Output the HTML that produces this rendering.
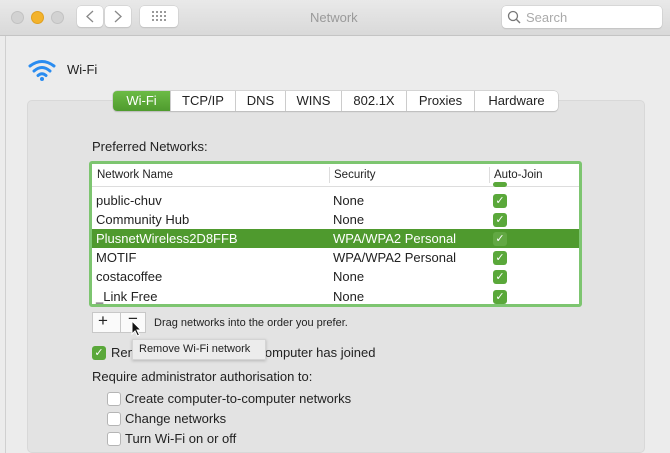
<!DOCTYPE html>
<html><head><style>
*{box-sizing:border-box;margin:0;padding:0}
body{width:670px;height:453px;overflow:hidden;font-family:"Liberation Sans",sans-serif;background:#ececec;position:relative;color:#222;font-size:13px}
.abs{position:absolute}
.title{left:0;top:0;width:670px;height:36px;background:linear-gradient(#e9e9e9,#d9d9d9);border-bottom:1px solid #c4c4c4}
.dot{width:13px;height:13px;border-radius:50%;top:11px;background:#d2d2d2;border:1px solid #c2c2c2}
.btn{background:#fff;border-radius:4px;box-shadow:0 0 0 .5px #c8c8c8,0 1px 1px #bbb;height:21px;top:6px}
.tab{top:91px;height:20px;border-right:1px solid #ccc;text-align:center;line-height:19px;font-size:13px}
.cb{width:14px;height:14px;border-radius:3px;background:#fff;border:1px solid #b5b5b5}
.gc{width:14px;height:14px;border-radius:3px;background:#5aa83a;color:#fff;font-size:11px;line-height:14px;text-align:center}
.row{left:92px;width:487px;height:19px;line-height:19px;font-size:13px}
.row span{position:absolute}
</style></head><body>
<div class="abs title"></div>
<div class="abs dot" style="left:11px"></div>
<div class="abs dot" style="left:31px;background:#f3b32c;border-color:#e0a020"></div>
<div class="abs dot" style="left:51px"></div>
<div class="abs btn" style="left:77px;width:26px"></div>
<div class="abs btn" style="left:105px;width:26px"></div>
<svg class="abs" style="left:77px;top:6px" width="54" height="21"><path d="M93 0" /><path d="M16 5 L10 10.5 L16 16" fill="none" stroke="#888" stroke-width="1.3"/><path d="M38 5 L44 10.5 L38 16" fill="none" stroke="#888" stroke-width="1.3"/></svg>
<div class="abs btn" style="left:140px;width:38px"></div>
<svg class="abs" style="left:152px;top:11px" width="14" height="10"><g fill="#999"><rect x="0" y="0" width="2" height="2"/><rect x="4" y="0" width="2" height="2"/><rect x="8" y="0" width="2" height="2"/><rect x="12" y="0" width="2" height="2"/><rect x="0" y="4" width="2" height="2"/><rect x="4" y="4" width="2" height="2"/><rect x="8" y="4" width="2" height="2"/><rect x="12" y="4" width="2" height="2"/><rect x="0" y="8" width="2" height="2"/><rect x="4" y="8" width="2" height="2"/><rect x="8" y="8" width="2" height="2"/><rect x="12" y="8" width="2" height="2"/></g></svg>
<div class="abs" style="left:310px;top:10px;color:#9a9a9a;font-size:13px">Network</div>
<div class="abs btn" style="left:502px;width:160px;top:6px;height:22px"></div>
<svg class="abs" style="left:507px;top:10px" width="14" height="14"><circle cx="6" cy="6" r="4.5" fill="none" stroke="#777" stroke-width="1.3"/><line x1="9.3" y1="9.3" x2="13" y2="13" stroke="#777" stroke-width="1.4"/></svg>
<div class="abs" style="left:526px;top:10px;color:#aaa;font-size:13px">Search</div>
<div class="abs" style="left:5px;top:36px;width:1px;height:417px;background:#d0d0d0"></div>
<svg class="abs" style="left:27px;top:58px" width="32" height="24"><g fill="none" stroke="#2a8cf0" stroke-width="3" stroke-linecap="round"><path d="M3 8 Q15 -1 27 8"/><path d="M7 13 Q15 6 23 13"/><path d="M11 17.5 Q15 14 19 17.5"/></g><circle cx="15" cy="21" r="2" fill="#2a8cf0"/></svg>
<div class="abs" style="left:67px;top:62px;font-size:13px">Wi-Fi</div>
<div class="abs" style="left:27px;top:100px;width:618px;height:353px;background:#e3e3e3;border:1px solid #d8d8d8;border-radius:5px"></div>
<div class="abs" style="left:113px;top:91px;width:445px;height:20px;background:#fff;border-radius:4px;box-shadow:0 0 0 .5px #bbb,0 1px 1px #bbb"></div>
<div class="abs tab" style="left:113px;width:58px;background:linear-gradient(#6cbb45,#4f9b2e);color:#fff;border-radius:4px 0 0 4px">Wi-Fi</div>
<div class="abs tab" style="left:171px;width:65px">TCP/IP</div>
<div class="abs tab" style="left:236px;width:50px">DNS</div>
<div class="abs tab" style="left:286px;width:56px">WINS</div>
<div class="abs tab" style="left:342px;width:65px">802.1X</div>
<div class="abs tab" style="left:407px;width:68px">Proxies</div>
<div class="abs tab" style="left:475px;width:83px;border:none">Hardware</div>
<div class="abs" style="left:92px;top:139px">Preferred Networks:</div>
<div class="abs" style="left:89px;top:161px;width:493px;height:146px;border:3px solid #7dc570;border-radius:3px;background:#fff"></div>
<div class="abs" style="left:92px;top:164px;width:487px;height:23px;border-bottom:1px solid #ddd;font-size:11.5px;line-height:22px">
<span class="abs" style="left:5px">Network Name</span><span class="abs" style="left:237px;top:3px;height:16px;border-left:1px solid #ddd"></span><span class="abs" style="left:242px">Security</span><span class="abs" style="left:397px;top:3px;height:16px;border-left:1px solid #ddd"></span><span class="abs" style="left:402px">Auto-Join</span></div>
<div class="abs gc" style="left:493px;top:182px;height:5px"></div>
<div class="abs row" style="top:191px"><span style="left:4px">public-chuv</span><span style="left:241px">None</span><span class="gc" style="left:401px;top:3px">✓</span></div>
<div class="abs row" style="top:210px"><span style="left:4px">Community Hub</span><span style="left:241px">None</span><span class="gc" style="left:401px;top:3px">✓</span></div>
<div class="abs row" style="top:229px;background:#4f9a2e;color:#fff"><span style="left:4px">PlusnetWireless2D8FFB</span><span style="left:241px">WPA/WPA2 Personal</span><span class="gc" style="left:401px;top:3px;background:#62a843">✓</span></div>
<div class="abs row" style="top:248px"><span style="left:4px">MOTIF</span><span style="left:241px">WPA/WPA2 Personal</span><span class="gc" style="left:401px;top:3px">✓</span></div>
<div class="abs row" style="top:267px"><span style="left:4px">costacoffee</span><span style="left:241px">None</span><span class="gc" style="left:401px;top:3px">✓</span></div>
<div class="abs row" style="top:287px"><span style="left:4px">_Link Free</span><span style="left:241px">None</span><span class="gc" style="left:401px;top:3px">✓</span></div>
<div class="abs" style="left:92px;top:312px;width:54px;height:21px;background:#fafafa;border:1px solid #c8c8c8"></div>
<div class="abs" style="left:120px;top:312px;width:1px;height:21px;background:#c8c8c8"></div>
<div class="abs" style="left:98px;top:311px;font-size:17px">+</div>
<div class="abs" style="left:128px;top:309px;font-size:17px">−</div>
<svg class="abs" style="left:131px;top:320px" width="12" height="18"><path d="M1 1 L1 14 L4 11 L6.5 16 L8.5 15 L6 10 L10 10 Z" fill="#111" stroke="#fff" stroke-width="1"/></svg>
<div class="abs" style="left:154px;top:317px;font-size:11px">Drag networks into the order you prefer.</div>
<div class="abs gc" style="left:92px;top:346px">✓</div>
<div class="abs" style="left:111px;top:345px">Remember networks this computer has joined</div>
<div class="abs" style="left:132px;top:339px;width:134px;height:21px;background:#ececec;border:1px solid #d4d4d4;box-shadow:0 1px 3px rgba(0,0,0,.2);font-size:11px;line-height:19px;padding-left:6px">Remove Wi-Fi network</div>
<div class="abs" style="left:92px;top:369px">Require administrator authorisation to:</div>
<div class="abs cb" style="left:107px;top:392px"></div>
<div class="abs" style="left:125px;top:391px">Create computer-to-computer networks</div>
<div class="abs cb" style="left:107px;top:412px"></div>
<div class="abs" style="left:125px;top:411px">Change networks</div>
<div class="abs cb" style="left:107px;top:432px"></div>
<div class="abs" style="left:125px;top:431px">Turn Wi-Fi on or off</div>
</body></html>
